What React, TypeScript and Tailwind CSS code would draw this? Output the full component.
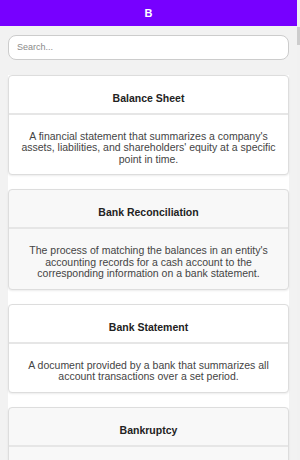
import React, { useState } from "react";

type Term = {
  title: string;
  definition: string;
};

const terms: Term[] = [
  {
    title: "Balance Sheet",
    definition:
      "A financial statement that summarizes a company's assets, liabilities, and shareholders' equity at a specific point in time.",
  },
  {
    title: "Bank Reconciliation",
    definition:
      "The process of matching the balances in an entity's accounting records for a cash account to the corresponding information on a bank statement.",
  },
  {
    title: "Bank Statement",
    definition:
      "A document provided by a bank that summarizes all account transactions over a set period.",
  },
  {
    title: "Bankruptcy",
    definition:
      "A legal process through which people or entities who cannot repay debts to creditors may seek relief from some or all of their debts.",
  },
  {
    title: "Base Year",
    definition:
      "The first year in a series of years used as a benchmark for measuring financial or economic data.",
  },
  {
    title: "Basis Point",
    definition:
      "A unit of measure equal to one hundredth of one percent, used for interest rates and other percentages in finance.",
  },
  {
    title: "Bear Market",
    definition:
      "A market condition in which the prices of securities are falling and widespread pessimism causes the negative sentiment to continue.",
  },
  {
    title: "Beta",
    definition:
      "A measure of the volatility of a security or portfolio compared to the market as a whole.",
  },
  {
    title: "Bill of Exchange",
    definition:
      "A written order binding one party to pay a fixed sum of money to another party on demand or at a predetermined date.",
  },
  {
    title: "Bond",
    definition:
      "A fixed income instrument that represents a loan made by an investor to a borrower, typically corporate or governmental.",
  },
  {
    title: "Book Value",
    definition:
      "The value of an asset according to its balance sheet account balance, equal to its cost less accumulated depreciation.",
  },
  {
    title: "Bookkeeping",
    definition:
      "The recording, on a day-to-day basis, of the financial transactions and information pertaining to a business.",
  },
  {
    title: "Break-even Point",
    definition:
      "The point at which total cost and total revenue are equal, meaning there is no loss or gain.",
  },
  {
    title: "Budget",
    definition:
      "An estimation of revenue and expenses over a specified future period of time.",
  },
  {
    title: "Bull Market",
    definition:
      "A financial market condition in which prices are rising or are expected to rise.",
  },
  {
    title: "Business Entity",
    definition:
      "An organization created by one or more natural persons to carry on a trade or business.",
  },
];

const App: React.FC = () => {
  const [query, setQuery] = useState<string>("");

  const filtered = terms.filter((term) =>
    term.title.toLowerCase().includes(query.toLowerCase())
  );

  return (
    <div className="relative h-[460px] overflow-hidden bg-[#f2f2f2] font-['Liberation_Sans',Arial,sans-serif]">
      <div className="h-full w-[297px] overflow-y-auto">
        <header className="sticky top-0 z-10 flex h-[26px] items-center justify-center bg-[#7700ff] text-[11px] font-bold text-white">
          B
        </header>

        <div className="px-2 pt-[7px]">
          <input
            type="text"
            value={query}
            onChange={(e) => setQuery(e.target.value)}
            placeholder="Search..."
            className="h-[25px] w-full rounded-lg border border-[#cccccc] bg-white px-2 text-[9px] text-[#333] outline-none placeholder:text-[#8a8a8a]"
          />
        </div>

        <div className="mx-2 mt-[15px] flex flex-col gap-[14px] bg-white">
          {filtered.map((term, index) => (
            <div
              key={term.title}
              className={`rounded-[4px] border border-[#dddddd] shadow-[0_1px_2px_rgba(0,0,0,0.08)] ${
                index % 2 === 0 ? "bg-white" : "bg-[#f8f8f8]"
              }`}
            >
              <h3 className="border-b-2 border-[#e6e6e6] pt-[15px] pb-2 text-center text-[10.5px] font-bold leading-[14px] text-[#222]">
                {term.title}
              </h3>
              <p className="px-3 pt-[16px] pb-[9px] text-center text-[10.5px] leading-[11.5px] text-[#444]">
                {term.definition}
              </p>
            </div>
          ))}
        </div>
      </div>

      {/* scrollbar strip, as the reference shows it */}
      <div className="absolute top-0 right-0 h-full w-[3px] bg-[#f1f1f1]">
        <div className="mt-[27px] h-[18px] w-full bg-[#cdcdcd]" />
      </div>
    </div>
  );
};

export default App;
